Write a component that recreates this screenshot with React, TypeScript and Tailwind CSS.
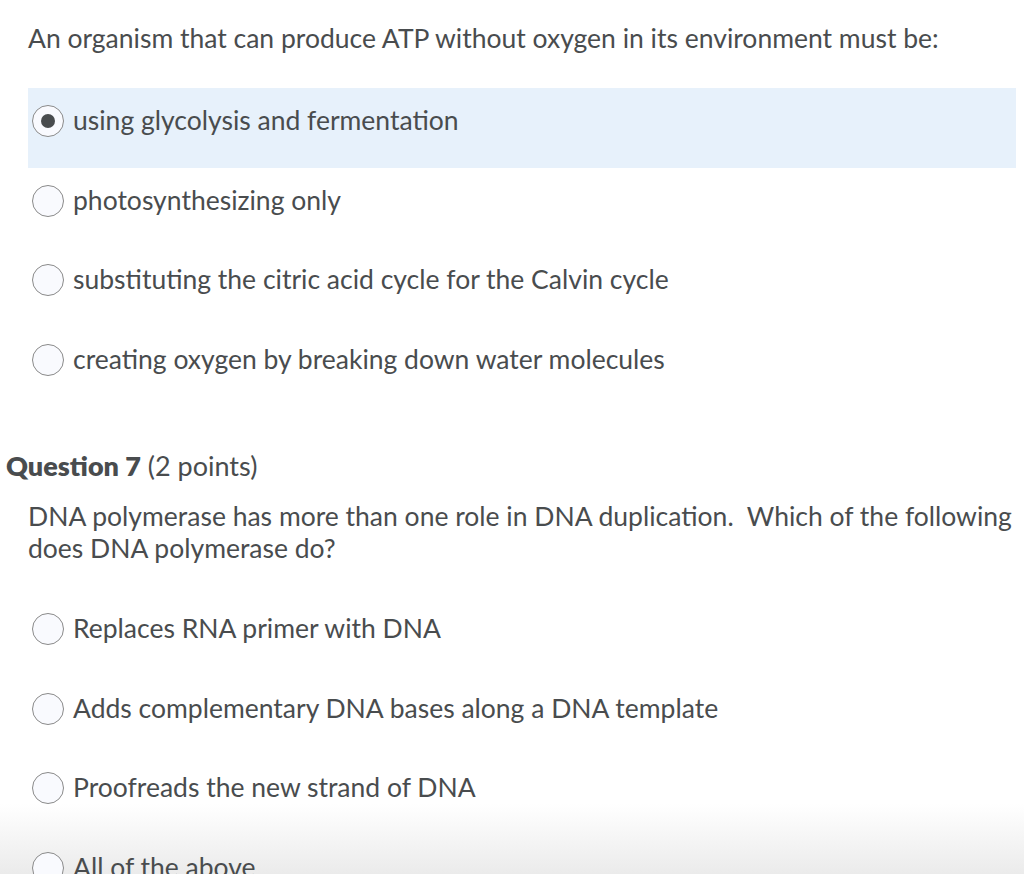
import React from "react";

function Radio({ checked }: { checked?: boolean }) {
  return (
    <span className="flex h-[32px] w-[32px] shrink-0 items-center justify-center rounded-full border-[1.5px] border-[#8a8a8a] bg-[#f9fafe]">
      {checked && <span className="block h-[14px] w-[14px] rounded-full bg-[#494c4e]" />}
    </span>
  );
}

function Option({ label, checked }: { label: string; checked?: boolean }) {
  return (
    <div className={`flex h-[79.5px] items-start pl-[4px] pt-[17px] ${checked ? "bg-[#e7f1fb]" : ""}`}>
      <Radio checked={checked} />
      <span className="-mt-[1px] ml-[9px] whitespace-nowrap text-[26.5px] leading-[32px]">{label}</span>
    </div>
  );
}

export default function App() {
  return (
    <div
      className="relative h-[874px] w-[1024px] overflow-hidden bg-white text-[#494c4e]"
      style={{ fontFamily: "Lato, 'Open Sans', sans-serif" }}
    >
      <div className="pointer-events-none absolute bottom-0 left-0 right-0 h-[70px] bg-gradient-to-b from-white to-[#ebebeb]" />
      <div className="relative">
        <p className="pl-[28px] pt-[22px] text-[26.5px] leading-[32px] whitespace-nowrap">
          An organism that can produce ATP without oxygen in its environment must be:
        </p>
        <div className="mr-[8px] ml-[28px] mt-[34px]">
          <Option label="using glycolysis and fermentation" checked />
          <Option label="photosynthesizing only" />
          <Option label="substituting the citric acid cycle for the Calvin cycle" />
          <Option label="creating oxygen by breaking down water molecules" />
        </div>
        <h2 className="mt-[44px] pl-[6px] text-[27px] leading-[32px]">
          <span className="font-extrabold">Question 7</span> (2 points)
        </h2>
        <p className="mt-[18px] whitespace-pre pl-[28px] text-[26.5px] leading-[32px]">
          {"DNA polymerase has more than one role in DNA duplication.  Which of the following"}
          <br />
          {"does DNA polymerase do?"}
        </p>
        <div className="ml-[28px] mt-[32px]">
          <Option label="Replaces RNA primer with DNA" />
          <Option label="Adds complementary DNA bases along a DNA template" />
          <Option label="Proofreads the new strand of DNA" />
          <Option label="All of the above" />
        </div>
      </div>
    </div>
  );
}
